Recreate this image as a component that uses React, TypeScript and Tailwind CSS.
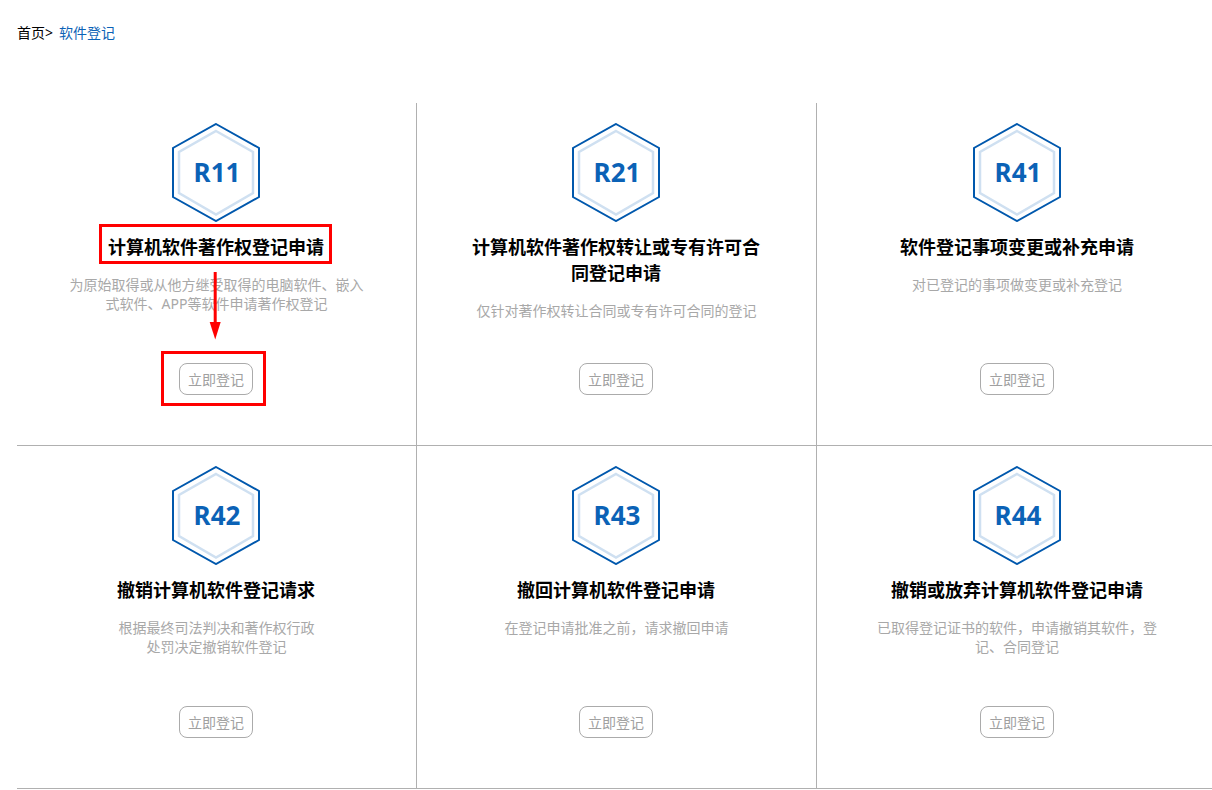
const cards = [
  { code: "R11", title: "计算机软件著作权登记申请", desc: ["为原始取得或从他方继受取得的电脑软件、嵌入", "式软件、APP等软件申请著作权登记"] },
  { code: "R21", title: "计算机软件著作权转让或专有许可合同登记申请", desc: ["仅针对著作权转让合同或专有许可合同的登记"] },
  { code: "R41", title: "软件登记事项变更或补充申请", desc: ["对已登记的事项做变更或补充登记"] },
  { code: "R42", title: "撤销计算机软件登记请求", desc: ["根据最终司法判决和著作权行政", "处罚决定撤销软件登记"] },
  { code: "R43", title: "撤回计算机软件登记申请", desc: ["在登记申请批准之前，请求撤回申请"] },
  { code: "R44", title: "撤销或放弃计算机软件登记申请", desc: ["已取得登记证书的软件，申请撤销其软件，登", "记、合同登记"] },
];

function Hexagon({ code }: { code: string }) {
  return (
    <div className="relative h-[99px] w-[88px] shrink-0">
      <svg width="88" height="99" viewBox="0 0 88 99" className="block" fill="none">
        <polygon points="44,1 87,25 87,74 44,98 1,74 1,25" stroke="#0058ad" strokeWidth="2" />
        <polygon points="44,8 81,29 81,70 44,91.5 7,70 7,29" stroke="#cfe0f1" strokeWidth="2.5" />
      </svg>
      <div className="absolute inset-0 flex items-center justify-center pb-0.5 pl-[2px] text-[26px] font-bold leading-none text-[#0b62b6]">
        {code}
      </div>
    </div>
  );
}

function Card({ code, title, desc, index }: { code: string; title: string; desc: string[]; index: number }) {
  const bordered = index % 3 !== 2;
  return (
    <div
      className={
        "flex h-[343px] flex-col items-center border-b border-[#b0b0b0] pb-[50px] pt-5 " +
        (bordered ? "border-r pr-px" : "")
      }
    >
      <Hexagon code={code} />
      <h2 className="mt-3 w-[300px] text-center text-[18px] font-bold leading-[26px] text-black">{title}</h2>
      <div
        className={
          "mt-[15px] w-[310px] text-center text-[14px] leading-[19px] text-[#a8a8a8] " + (bordered ? "pl-px" : "")
        }
      >
        {desc.map((line) => (
          <p key={line}>{line}</p>
        ))}
      </div>
      <button className="mt-auto h-8 w-[74px] rounded-lg border border-[#ababab] bg-white text-[14px] text-[#a0a0a0]">
        立即登记
      </button>
    </div>
  );
}

export default function App() {
  return (
    <div
      className="relative h-[790px] w-[1212px] overflow-hidden bg-white pl-[17px]"
      style={{ fontFamily: '"Noto Sans", "Noto Sans CJK SC", sans-serif' }}
    >
      <div className="flex h-[103px] items-start pt-[23px] text-[14px] leading-[20px]">
        <span className="text-black">首页&gt;</span>
        <span className="ml-[6px] text-[#0b62b6]">软件登记</span>
      </div>
      <div className="grid w-[1200px] grid-cols-[400px_400px_400px]">
        {cards.map((c, i) => (
          <Card key={c.code} {...c} index={i} />
        ))}
      </div>

      <div className="absolute left-[99px] top-[224px] h-[40px] w-[233px] border-[3px] border-[#ff0000]" />
      <div className="absolute left-[161px] top-[351px] h-[55px] w-[105px] border-[3px] border-[#ff0000]" />
      <svg className="absolute left-[205px] top-[271px]" width="20" height="70" viewBox="0 0 20 70" fill="none">
        <line x1="10.2" y1="1" x2="10.2" y2="52" stroke="#ff0000" strokeWidth="3" />
        <polygon points="4.7,51 15.7,51 10.2,68.5" fill="#ff0000" />
      </svg>
    </div>
  );
}
